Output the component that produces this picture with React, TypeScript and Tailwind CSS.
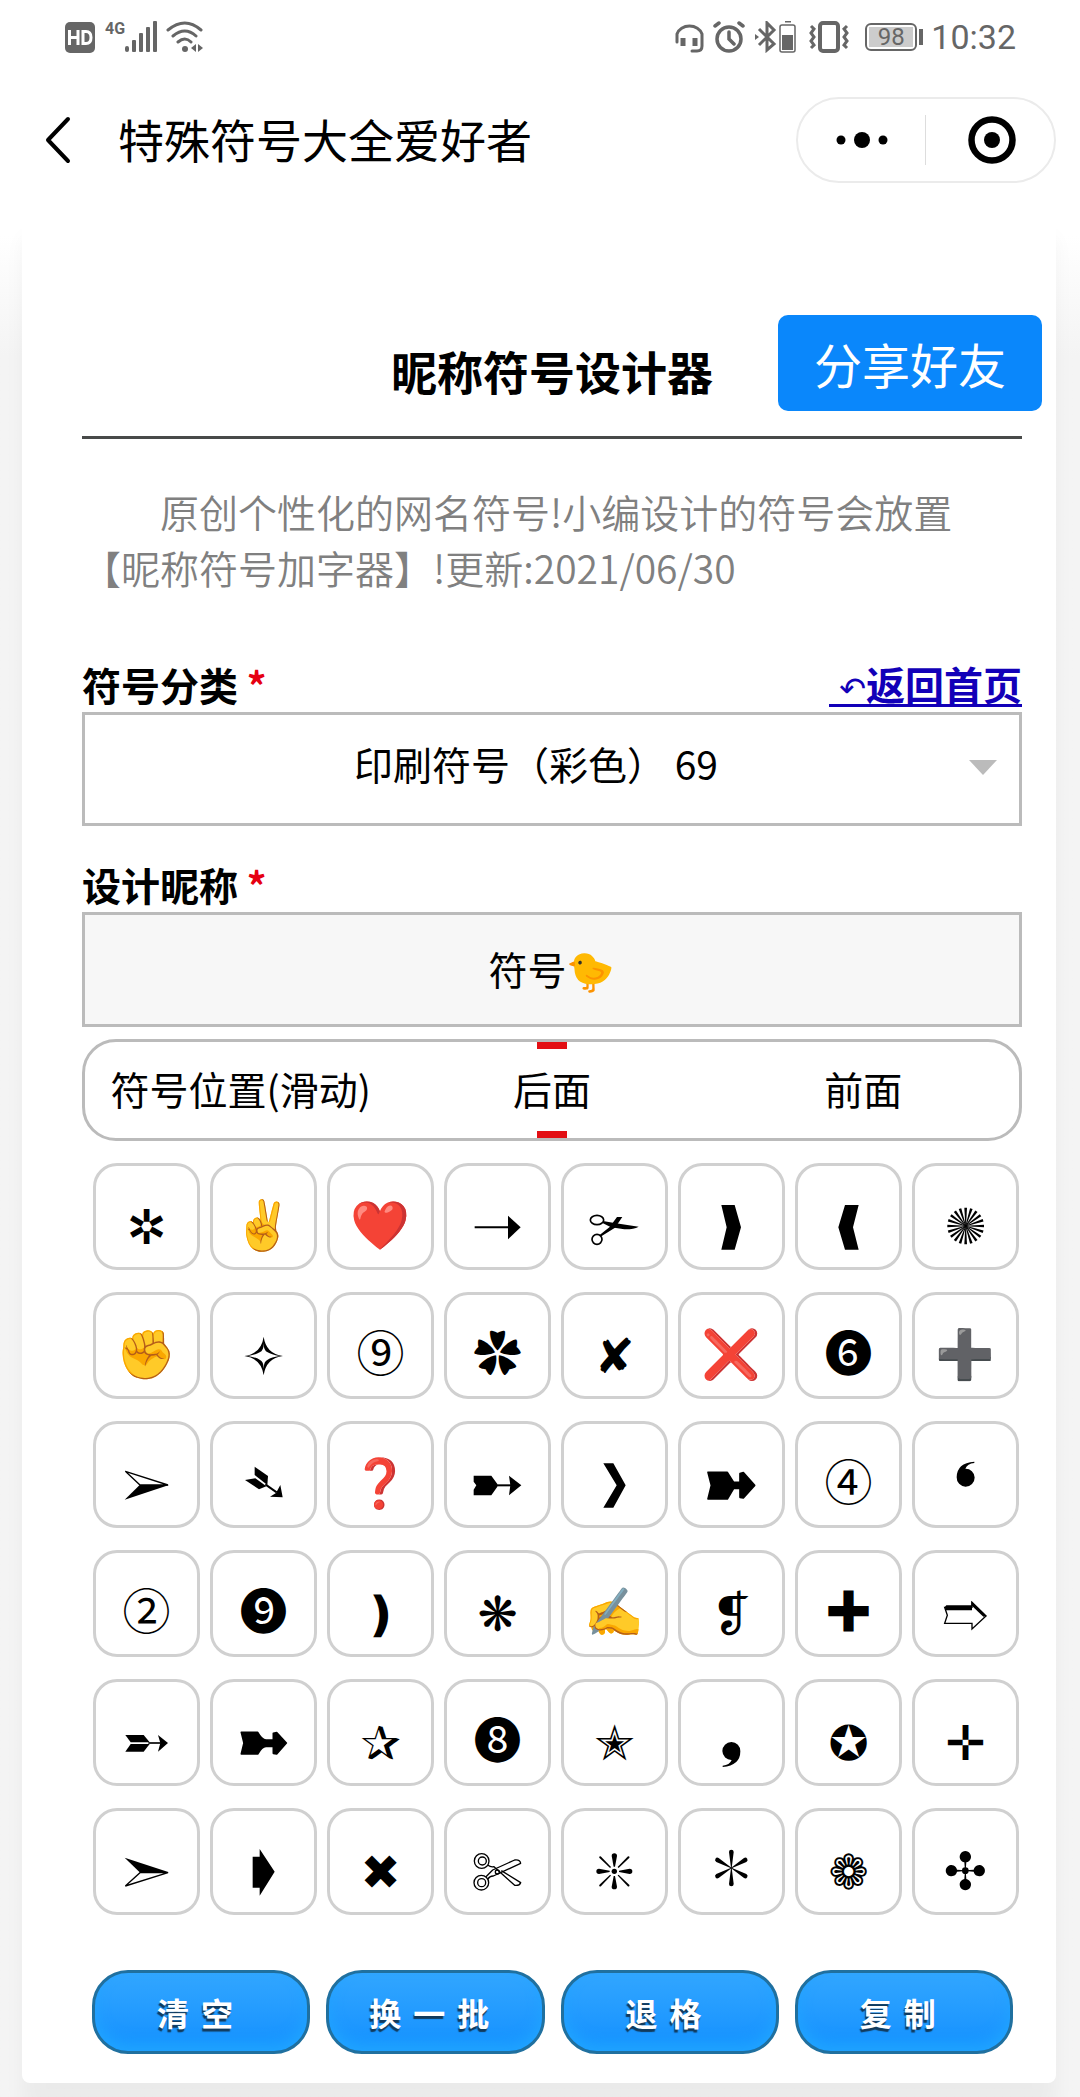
import React, { useState } from "react";

const CJK = "font-['Noto_Sans_CJK_SC',sans-serif]";

const spokes = (count: number, d: string, cx: number, cy: number, start = 0) => (
  <>
    {Array.from({ length: count }, (_, i) => (
      <path key={i} d={d} transform={`rotate(${start + (360 / count) * i} ${cx} ${cy})`} />
    ))}
  </>
);

/* Ornaments drawn on a 321-unit square that fills a key. */
const drawings: Record<string, React.ReactNode> = {
  "➝": (
    <>
      <path d="M92 193H196" stroke="black" strokeWidth="6" />
      <path d="M192 158L230 193L192 229Z" />
    </>
  ),
  "✁": (
    <>
      <g fill="none" stroke="black" strokeWidth="5">
        <ellipse cx="108" cy="171" rx="20" ry="14" />
        <ellipse cx="108" cy="229" rx="15" ry="15" />
      </g>
      <path d="M126 174L160 180L233 191Q216 200 190 199L150 193L126 181Z" />
      <path d="M115 217L146 192L168 162H184L162 194L121 220Z" />
    </>
  ),
  "❱": <path d="M130 126H170L189 193L170 260H130L146 193Z" />,
  "❰": <path d="M191 126H150L130 193L150 260H191L174 193Z" />,
  "✺": spokes(20, "M160 189L157 134H165L162 189Z", 161, 189),
  "✧": (
    <path
      fillRule="evenodd"
      d="M161 134Q168 185 219 192Q168 199 161 250Q154 199 103 192Q154 185 161 134ZM161 150Q162 176 149 181Q138 188 114 192Q138 196 149 203Q162 208 161 234Q160 208 173 203Q184 196 208 192Q184 188 173 181Q160 176 161 150Z"
    />
  ),
  "➢": (
    <>
      <path d="M97 151L225 192H141Z" fill="none" stroke="black" strokeWidth="4" />
      <path d="M95 236L140 192H228Z" />
    </>
  ),
  "➴": (
    <>
      <path d="M134 137L174 165L172 192L134 162Z" />
      <path d="M105 177L136 172L169 196L147 205Z" />
      <path d="M166 190L200 214" stroke="black" strokeWidth="6" />
      <path d="M211 192L218 229L180 227L198 216Z" />
    </>
  ),
  "➸": (
    <>
      <path d="M89 164H142L160 189V197L142 223H89V206L97 193L89 182Z" />
      <path d="M158 193H202" stroke="black" strokeWidth="6" />
      <path d="M195 164L232 193L195 223L199 193Z" />
    </>
  ),
  "❯": <path d="M127 127H157L194 193L157 260H127L167 193Z" />,
  "➽": (
    <path
      d="M90 154H148L167 184H186V158L196 155L230 193L196 231L186 229V202H167L148 234H90L100 193Z"
      stroke="black"
      strokeWidth="5"
      strokeLinejoin="round"
    />
  ),
  "❛": <path d="M187 122V126Q166 128 160 143A27 27 0 1 1 134 169Q134 126 187 122Z" />,
  "❟": <path d="M134 264V260Q155 258 161 243A27 27 0 1 1 187 217Q187 260 134 264Z" />,
  "➱": (
    <>
      <path
        d="M98 172H180V157L222 198L180 237V220H98L106 196Z"
        fill="none"
        stroke="black"
        strokeWidth="4"
      />
      <path d="M98 172L103 166H180V181H102Z" />
      <path d="M178 153L224 198L214 200L178 166Z" />
    </>
  ),
  "➵": (
    <>
      <path d="M97 168H152L170 190H113Z" />
      <path d="M97 218H152L170 195H113Z" />
      <path d="M166 192H204" stroke="black" strokeWidth="5" />
      <path d="M195 168L225 192L195 218L202 192Z" />
    </>
  ),
  "➼": (
    <path
      d="M94 160H143Q156 183 168 183H190V163L200 161L229 192L200 225L190 223V202H168Q156 202 143 225H94L102 192Z"
      stroke="black"
      strokeWidth="5"
      strokeLinejoin="round"
    />
  ),
  "➣": (
    <>
      <path d="M95 149L228 193H140Z" />
      <path d="M97 234L225 194H141Z" fill="none" stroke="black" strokeWidth="4" />
    </>
  ),
  "➧": <path d="M128 146H149V123L194 191L149 263V239H128Z" />,
  "✄": (
    <g fill="none" stroke="black" strokeWidth="4" strokeLinejoin="round">
      <circle cx="113" cy="159" r="22" />
      <circle cx="115" cy="159" r="12" />
      <circle cx="112" cy="224" r="22" />
      <circle cx="113" cy="224" r="12" />
      <path d="M132 172Q140 178 150 176L212 232Q226 234 230 224L172 188" />
      <path d="M132 214Q136 204 148 204L230 166Q228 154 212 156L146 186Q136 196 126 206" />
      <circle cx="160" cy="192" r="6" />
    </g>
  ),
  "❈": (
    <>
      {spokes(4, "M158 176L152 144A8 8 0 0 1 168 144L162 176Z", 160, 190)}
      {spokes(4, "M158 174L157 130A3 3 0 0 1 163 130L162 174Z", 160, 190, 45)}
      <circle cx="160" cy="190" r="8" />
    </>
  ),
  "✻": spokes(6, "M159 180L153 132A7 7 0 0 1 167 132L161 180Z", 160, 180),
  "✣": (
    <>
      {spokes(4, "M159 188L157 163A17 17 0 1 1 163 163L161 188Z", 160, 188)}
      <circle cx="160" cy="188" r="10" />
    </>
  ),
};

const symbols = [
  "✲", "✌️", "❤️", "➝", "✁", "❱", "❰", "✺",
  "✊", "✧", "⑨", "✿", "✘", "❌", "❻", "➕",
  "➢", "➴", "❓", "➸", "❯", "➽", "④", "❛",
  "②", "❾", "❫", "❋", "✍️", "❡", "✚", "➱",
  "➵", "➼", "✰", "❽", "✭", "❟", "✪", "✛",
  "➣", "➧", "✖", "✄", "❈", "✻", "❁", "✣",
];

const cjkSymbols = "⑨✿❻④②❾✚❽";
const emoji = ["✌️", "❤️", "✊", "❌", "➕", "❓", "✍️"];

function SymbolKey({ symbol, onPick }: { symbol: string; onPick: () => void }) {
  const drawing = drawings[symbol];
  let content: React.ReactNode;
  if (drawing) {
    content = (
      <svg viewBox="0 0 321 321" className="-m-[3px] size-[107px] shrink-0" aria-hidden="true">
        {drawing}
      </svg>
    );
  } else if (cjkSymbols.includes(symbol)) {
    content = <span className={`${CJK} pt-2 text-5xl leading-none`}>{symbol}</span>;
  } else if (emoji.includes(symbol)) {
    content = <span className="pt-4 font-['DejaVu_Sans','Noto_Color_Emoji',sans-serif] text-5xl leading-none">{symbol}</span>;
  } else {
    content = <span className="pt-5 font-['DejaVu_Sans',sans-serif] text-5xl leading-none">{symbol}</span>;
  }
  return (
    <button
      type="button"
      aria-label={symbol}
      onClick={onPick}
      className="flex h-[107px] items-center justify-center rounded-3xl border-[3px] border-[#d0d0d0] bg-white"
    >
      {content}
    </button>
  );
}

function StatusBar() {
  return (
    <div className="flex h-[74px] items-center justify-between pr-16 pl-[65px] text-[#666]">
      <div className="flex items-center">
        <svg viewBox="0 0 30 31" className="h-[31px] w-[30px]" aria-hidden="true">
          <rect width="30" height="31" rx="5" fill="currentColor" />
          <path d="M4.500 8V23M13 8V23M4.500 15.500H13M18 9.500V21.500H21Q26 21.500 26 15.500Q26 9.500 21 9.500Z" fill="none" stroke="white" strokeWidth="3" />
        </svg>
        <span className="ml-2.5 self-start font-['Roboto',sans-serif] text-base leading-none font-bold">4G</span>
        <svg viewBox="0 0 33 32" className="h-8 w-[33px]" fill="currentColor" aria-hidden="true">
          <rect y="25" width="4" height="6" rx="2" />
          <rect x="7" y="19" width="4" height="12" rx="1" />
          <rect x="14" y="12" width="4" height="19" rx="1" />
          <rect x="21" y="6" width="4" height="25" rx="1" />
          <rect x="28" y="0" width="4" height="31" rx="1" />
        </svg>
        <svg viewBox="0 0 38 32" className="ml-2 h-8 w-[38px]" fill="none" stroke="currentColor" strokeWidth="3" strokeLinecap="round" aria-hidden="true">
          <path d="M2 9Q19 -5 35 9M7 15Q19 5 30 15M12 21Q19 15 25 21" />
          <circle cx="19" cy="28" r="3" fill="currentColor" stroke="none" />
          <path d="M30 23V31L25 27ZM32 23V31L37 27Z" fill="currentColor" stroke="none" />
        </svg>
      </div>
      <div className="flex items-center">
        <svg viewBox="0 0 30 32" className="h-8 w-[30px]" fill="none" stroke="currentColor" strokeWidth="3" strokeLinecap="round" aria-hidden="true">
          <path d="M2 21V13A13 11 0 0 1 27 13V25Q27 30 22 30H17" />
          <path d="M8 17V25M20 17V25" strokeWidth="5" strokeLinecap="butt" />
        </svg>
        <svg viewBox="0 0 32 32" className="ml-2 h-8 w-8" fill="none" stroke="currentColor" strokeWidth="3.500" strokeLinecap="round" aria-hidden="true">
          <circle cx="16" cy="18" r="12" />
          <path d="M2 5L6 2M30 5L26 2M16 11V18L21 23" />
        </svg>
        <svg viewBox="0 0 42 32" className="ml-2.5 h-8 w-[42px]" fill="none" stroke="currentColor" strokeWidth="3" aria-hidden="true">
          <path d="M4 8L19 23L12 29V2L19 9L4 24" />
          <path d="M0 13L4 16L0 19Z" fill="currentColor" stroke="none" />
          <rect x="25" y="4" width="15" height="27" rx="2" strokeWidth="1.500" />
          <path d="M30 0.500H36" strokeWidth="2" />
          <rect x="27" y="14" width="11" height="15" fill="currentColor" stroke="none" />
        </svg>
        <svg viewBox="0 0 40 32" className="ml-3 h-8 w-10" fill="none" stroke="currentColor" strokeWidth="3" aria-hidden="true">
          <rect x="11" y="2" width="18" height="28" rx="3" strokeWidth="4" />
          <path d="M2 5L5 8L2 12L5 16L2 20L5 24L2 27M38 5L35 8L38 12L35 16L38 20L35 24L38 27" />
        </svg>
        <div className="ml-4 flex items-center">
          <div className="rounded-md border-2 border-current p-0.5">
            <div className="flex h-5 w-11 items-center justify-center bg-[#ccc] font-['Roboto',sans-serif] text-2xl leading-none">98</div>
          </div>
          <div className="ml-0.5 h-4 w-1 bg-current" />
        </div>
        <span className="ml-2 font-['Roboto',sans-serif] text-[34px] leading-none">10:32</span>
      </div>
    </div>
  );
}

function NavBar() {
  return (
    <header className="flex h-[132px] items-center pr-6 pl-11">
      <button type="button" aria-label="返回">
        <svg viewBox="0 0 28 50" className="h-[50px] w-7" fill="none" stroke="black" strokeWidth="4" strokeLinecap="round" strokeLinejoin="round" aria-hidden="true">
          <path d="M24 4L4 25L24 46" />
        </svg>
      </button>
      <h1 className="ml-[46px] flex-1 pb-1 text-[46px] leading-none">特殊符号大全爱好者</h1>
      <div className="flex h-[86px] w-[260px] items-center rounded-full border-2 border-[#ebebeb]">
        <button type="button" aria-label="更多" className="flex w-1/2 justify-center border-r border-[#ddd] py-4">
          <svg viewBox="0 0 52 18" className="h-[18px] w-[52px]" aria-hidden="true">
            <circle cx="5" cy="9" r="4.500" />
            <circle cx="26" cy="9" r="8" />
            <circle cx="47" cy="9" r="4.500" />
          </svg>
        </button>
        <button type="button" aria-label="关闭" className="flex w-1/2 justify-center pl-1">
          <svg viewBox="0 0 50 50" className="size-[50px]" aria-hidden="true">
            <circle cx="25" cy="25" r="20.500" fill="none" stroke="black" strokeWidth="6.500" />
            <circle cx="25" cy="25" r="8" />
          </svg>
        </button>
      </div>
    </header>
  );
}

export default function App() {
  const [name, setName] = useState("符号🐤");
  const [position, setPosition] = useState("后面");

  return (
    <div className={`${CJK} min-h-screen bg-white text-black`}>
      <StatusBar />
      <NavBar />
      <main className="bg-linear-to-b from-white from-[30px] to-[#f4f4f4] to-[150px] pr-6 pb-3.5 pl-[22px]">
        <section className="rounded-lg bg-white pt-[109px] pr-[34px] pb-[29px] pl-[60px] shadow-[0_30px_20px_rgba(0,0,0,0.04)]">
          <div className="grid h-[124px] grid-cols-[1fr_auto_1fr] items-start border-b-[3px] border-[#484a49]">
            <h2 className="col-start-2 pt-8 text-[46px] leading-none font-bold">昵称符号设计器</h2>
            <button
              type="button"
              className="-mr-5 h-24 w-[264px] justify-self-end rounded-[10px] bg-[#0a87fb] text-5xl text-white"
            >
              分享好友
            </button>
          </div>

          <p className="mt-11 pr-8 indent-[78px] text-[39px] leading-[56px] font-[350] text-[#808080]">
            原创个性化的网名符号!小编设计的符号会放置【昵称符号加字器】!更新:2021/06/30
          </p>

          <div className="mt-[61px] flex h-14 items-center justify-between text-[39px] leading-none font-bold">
            <label htmlFor="category">
              符号分类 <span className="text-[#e60012]">*</span>
            </label>
            <a href="#home" className="text-[#1200b8] underline decoration-3 underline-offset-4">
              <span className="font-['DejaVu_Sans',sans-serif] text-[32px] leading-none font-normal">&nbsp;↶</span>返回首页
            </a>
          </div>
          <div className="relative">
            <select
              id="category"
              className="block h-[114px] w-full appearance-none border-[3px] border-[#bbb] bg-white pr-8 pb-3 text-center text-[39px] [text-align-last:center]"
            >
              <option>印刷符号（彩色） 69</option>
            </select>
            <svg viewBox="0 0 28 15" className="pointer-events-none absolute top-12 right-[25px] h-[15px] w-7" fill="#bbb" aria-hidden="true">
              <path d="M0 0H28L14 15Z" />
            </svg>
          </div>

          <div className="mt-[30px] flex h-14 items-center text-[39px] leading-none font-bold">
            <label htmlFor="nickname">
              设计昵称 <span className="text-[#e60012]">*</span>
            </label>
          </div>
          <input
            id="nickname"
            type="text"
            value={name}
            onChange={(e) => setName(e.target.value)}
            className="block h-[115px] w-full border-[3px] border-[#bbb] bg-[#f7f7f7] pb-1 text-center text-[39px]"
          />

          <div className="mt-3 grid h-[102px] grid-cols-3 items-stretch rounded-[34px] border-[3px] border-[#bbb] text-[39px]">
            <div className="flex items-center justify-center pb-1">符号位置(滑动)</div>
            {["后面", "前面"].map((p) => (
              <button
                key={p}
                type="button"
                aria-pressed={position === p}
                onClick={() => setPosition(p)}
                className="flex flex-col items-center justify-between"
              >
                <span className={position === p ? "h-[7px] w-[30px] bg-[#e30f14]" : "h-[7px] w-[30px]"} />
                <span className="pb-1 leading-none">{p}</span>
                <span className={position === p ? "h-[7px] w-[30px] bg-[#e30f14]" : "h-[7px] w-[30px]"} />
              </button>
            ))}
          </div>

          <div className="mt-[22px] grid grid-cols-8 gap-x-2.5 gap-y-[22px] pr-[3px] pl-[11px]">
            {symbols.map((s) => (
              <SymbolKey
                key={s}
                symbol={s}
                onPick={() => setName(position === "后面" ? name + s : s + name)}
              />
            ))}
          </div>

          <div className="mt-[55px] grid grid-cols-4 gap-4 pr-[9px] pl-2.5">
            {["清空", "换一批", "退格", "复制"].map((t) => (
              <button
                key={t}
                type="button"
                className="h-[84px] rounded-[36px] border-[3px] border-[#20709f] bg-linear-to-b from-[#31a6ff] to-[#1290ff] text-[32px] font-bold tracking-[12px] text-white shadow-[inset_0_-8px_14px_#20a4ff] [text-shadow:-1px_3px_1px_#123a5c]"
              >
                {t}
              </button>
            ))}
          </div>
        </section>
      </main>
    </div>
  );
}
